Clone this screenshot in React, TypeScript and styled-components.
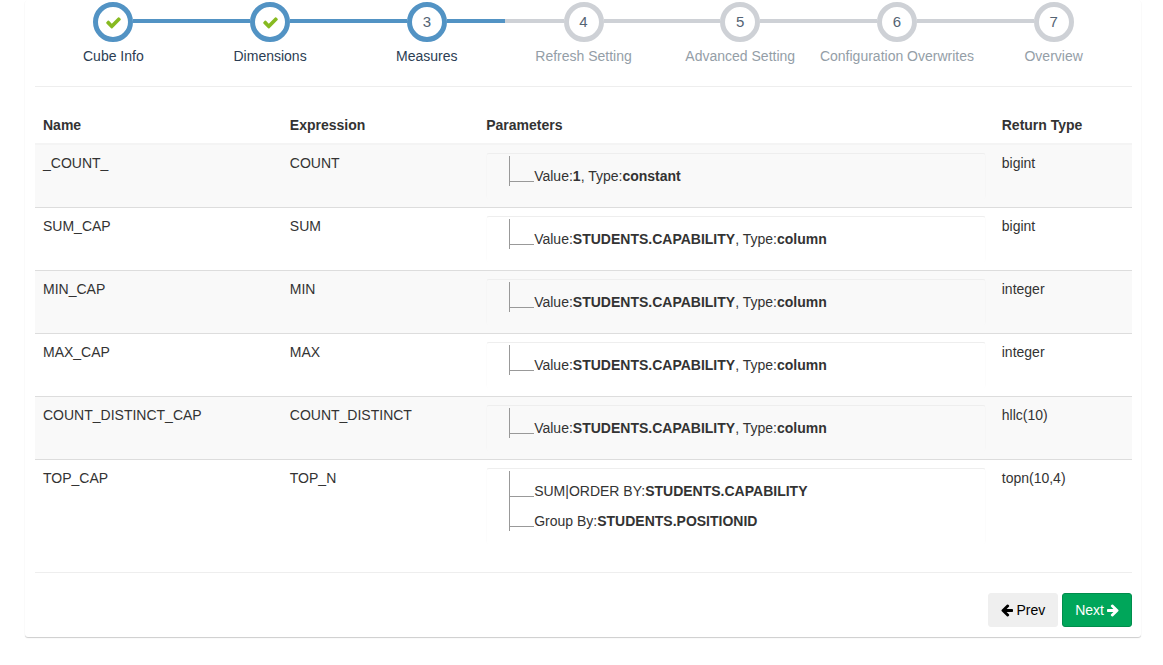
import React from "react";
import styled, { createGlobalStyle, css } from "styled-components";

const GlobalStyle = createGlobalStyle`
  *, *::before, *::after { box-sizing: border-box; }
  body {
    margin: 0;
    background: #fff;
    color: #333;
    font: 14px/20px "Liberation Sans", Arial, sans-serif;
  }
`;

const Page = styled.main`
  padding: 0 22px 28px 25px;
`;

const Card = styled.section`
  padding: 2px 9px 10px 10px;
  border-radius: 3px;
  background: #fff;
  box-shadow: 0 1px 1px rgba(0, 0, 0, 0.2);
`;

const Steps = styled.ol`
  display: flex;
  margin: 0;
  padding: 0;
  list-style: none;
`;

const Step = styled.li<{ $reached: boolean }>`
  --tone: ${(p) => (p.$reached ? "#5293c4" : "#ced1d6")};
  flex: 1 1 0;
  min-width: 0;
  display: flex;
  flex-direction: column;
  align-items: center;
  gap: 4px;
  color: ${(p) => (p.$reached ? "#2b3d53" : "#949ea7")};
  white-space: nowrap;
`;

const Track = styled.div`
  align-self: stretch;
  display: flex;
  align-items: center;
`;

const Rail = styled.span<{ $hidden?: boolean }>`
  flex: 1;
  height: 4px;
  margin-bottom: 2px;
  background: ${(p) => (p.$hidden ? "transparent" : "var(--tone)")};
`;

const Bullet = styled.span`
  display: flex;
  align-items: center;
  justify-content: center;
  width: 40px;
  height: 40px;
  border: 5px solid var(--tone);
  border-radius: 50%;
  background: #fff;
  color: #546474;
  font-size: 15px;
`;

const CheckIcon = styled.svg`
  width: 17px;
  height: 17px;
  fill: #87ba21;
`;

const ArrowIcon = styled.svg`
  width: 12px;
  height: 14px;
  fill: currentColor;
`;

const Rule = styled.hr`
  margin: 20px 0;
  border: 0;
  border-top: 1px solid #eee;
`;

const Table = styled.table`
  width: 100%;
  table-layout: fixed;
  border-collapse: separate;
  border-spacing: 0;
`;

const HeadCell = styled.th<{ $width?: string }>`
  width: ${(p) => p.$width ?? "auto"};
  padding: 8px;
  border-bottom: 2px solid #f4f4f4;
  text-align: left;
`;

const Row = styled.tr`
  &:nth-child(odd) { background: #f9f9f9; }
  & + & > td { border-top: 1px solid #ddd; }
`;

const Cell = styled.td`
  padding: 8px;
  vertical-align: top;
`;

const ParamBox = styled.div`
  padding: 2px 0 13px 22px;
  border: 1px solid rgba(0, 0, 0, 0.01);
  border-top-color: #eee;
  border-bottom: 0;
  border-radius: 3px;
`;

const Tree = styled.ul`
  margin: 0;
  padding: 0;
  border-left: 1px solid #999;
  list-style: none;
`;

const Branch = styled.li`
  display: flex;
  height: 30px;
  padding-top: 10px;

  &::before {
    content: "";
    width: 24px;
    height: 16px;
    border-bottom: 1px solid #999;
  }
`;

const Actions = styled.div`
  display: flex;
  justify-content: flex-end;
  gap: 4px;
`;

const Button = styled.button<{ $primary?: boolean }>`
  display: flex;
  align-items: center;
  gap: 3px;
  height: 34px;
  padding: 0 12px;
  border: 1px solid #efefef;
  border-radius: 3px;
  background: #efefef;
  color: #000;
  font: inherit;
  cursor: pointer;
  ${(p) =>
    p.$primary &&
    css`
      border-color: #008d4c;
      background: #00a65a;
      color: #fff;
    `}
`;

const Check = () => (
  <CheckIcon viewBox="0 0 1792 1792" role="img" aria-label="Completed">
    <path d="M1671 566q0 40-28 68l-724 724-136 136q-28 28-68 28t-68-28l-136-136-362-362q-28-28-28-68t28-68l136-136q28-28 68-28t68 28l294 295 656-657q28-28 68-28t68 28l136 136q28 28 28 68z" />
  </CheckIcon>
);

const ArrowLeft = () => (
  <ArrowIcon viewBox="128 0 1536 1792" aria-hidden="true">
    <path d="M1664 896v128q0 53-32.5 90.5t-84.5 37.5h-704l293 294q38 36 38 90t-38 90l-75 76q-37 37-90 37-52 0-91-37l-651-652q-37-37-37-90 0-52 37-91l651-650q38-38 91-38 52 0 90 38l75 74q38 38 38 91t-38 91l-293 293h704q52 0 84.5 37.5t32.5 90.5z" />
  </ArrowIcon>
);

const ArrowRight = () => (
  <ArrowIcon viewBox="128 0 1536 1792" aria-hidden="true">
    <path d="M1600 960q0 54-37 91l-651 651q-39 37-91 37-51 0-90-37l-75-75q-38-38-38-91t38-91l293-293h-704q-52 0-84.5-37.5t-32.5-90.5v-128q0-53 32.5-90.5t84.5-37.5h704l-293-294q-38-36-38-90t38-90l75-75q38-38 90-38 53 0 91 38l651 651q37 35 37 90z" />
  </ArrowIcon>
);

const steps = [
  "Cube Info",
  "Dimensions",
  "Measures",
  "Refresh Setting",
  "Advanced Setting",
  "Configuration Overwrites",
  "Overview",
];
const current = 2;

type Part = [label: string, value: string];
type Measure = { name: string; expression: string; params: Part[][]; type: string };

const capability: Part[][] = [
  [["Value:", "STUDENTS.CAPABILITY"], [", Type:", "column"]],
];

const measures: Measure[] = [
  { name: "_COUNT_", expression: "COUNT", params: [[["Value:", "1"], [", Type:", "constant"]]], type: "bigint" },
  { name: "SUM_CAP", expression: "SUM", params: capability, type: "bigint" },
  { name: "MIN_CAP", expression: "MIN", params: capability, type: "integer" },
  { name: "MAX_CAP", expression: "MAX", params: capability, type: "integer" },
  { name: "COUNT_DISTINCT_CAP", expression: "COUNT_DISTINCT", params: capability, type: "hllc(10)" },
  {
    name: "TOP_CAP",
    expression: "TOP_N",
    params: [[["SUM|ORDER BY:", "STUDENTS.CAPABILITY"]], [["Group By:", "STUDENTS.POSITIONID"]]],
    type: "topn(10,4)",
  },
];

export default function App() {
  return (
    <Page>
      <GlobalStyle />
      <Card>
        <Steps>
          {steps.map((label, i) => (
            <Step key={label} $reached={i <= current} aria-current={i === current ? "step" : undefined}>
              <Track>
                <Rail $hidden={i === 0} />
                <Bullet>{i < current ? <Check /> : i + 1}</Bullet>
                <Rail $hidden={i === steps.length - 1} />
              </Track>
              <span>{label}</span>
            </Step>
          ))}
        </Steps>
        <Rule />
        <Table>
          <thead>
            <tr>
              <HeadCell $width="22.5%">Name</HeadCell>
              <HeadCell $width="17.9%">Expression</HeadCell>
              <HeadCell $width="47%">Parameters</HeadCell>
              <HeadCell>Return Type</HeadCell>
            </tr>
          </thead>
          <tbody>
            {measures.map((m) => (
              <Row key={m.name}>
                <Cell>{m.name}</Cell>
                <Cell>{m.expression}</Cell>
                <Cell>
                  <ParamBox>
                    <Tree>
                      {m.params.map((parts, i) => (
                        <Branch key={i}>
                          <span>
                            {parts.map(([label, value]) => (
                              <React.Fragment key={label}>
                                {label}
                                <b>{value}</b>
                              </React.Fragment>
                            ))}
                          </span>
                        </Branch>
                      ))}
                    </Tree>
                  </ParamBox>
                </Cell>
                <Cell>{m.type}</Cell>
              </Row>
            ))}
          </tbody>
        </Table>
        <Rule />
        <Actions>
          <Button type="button">
            <ArrowLeft />
            Prev
          </Button>
          <Button type="button" $primary>
            Next
            <ArrowRight />
          </Button>
        </Actions>
      </Card>
    </Page>
  );
}
